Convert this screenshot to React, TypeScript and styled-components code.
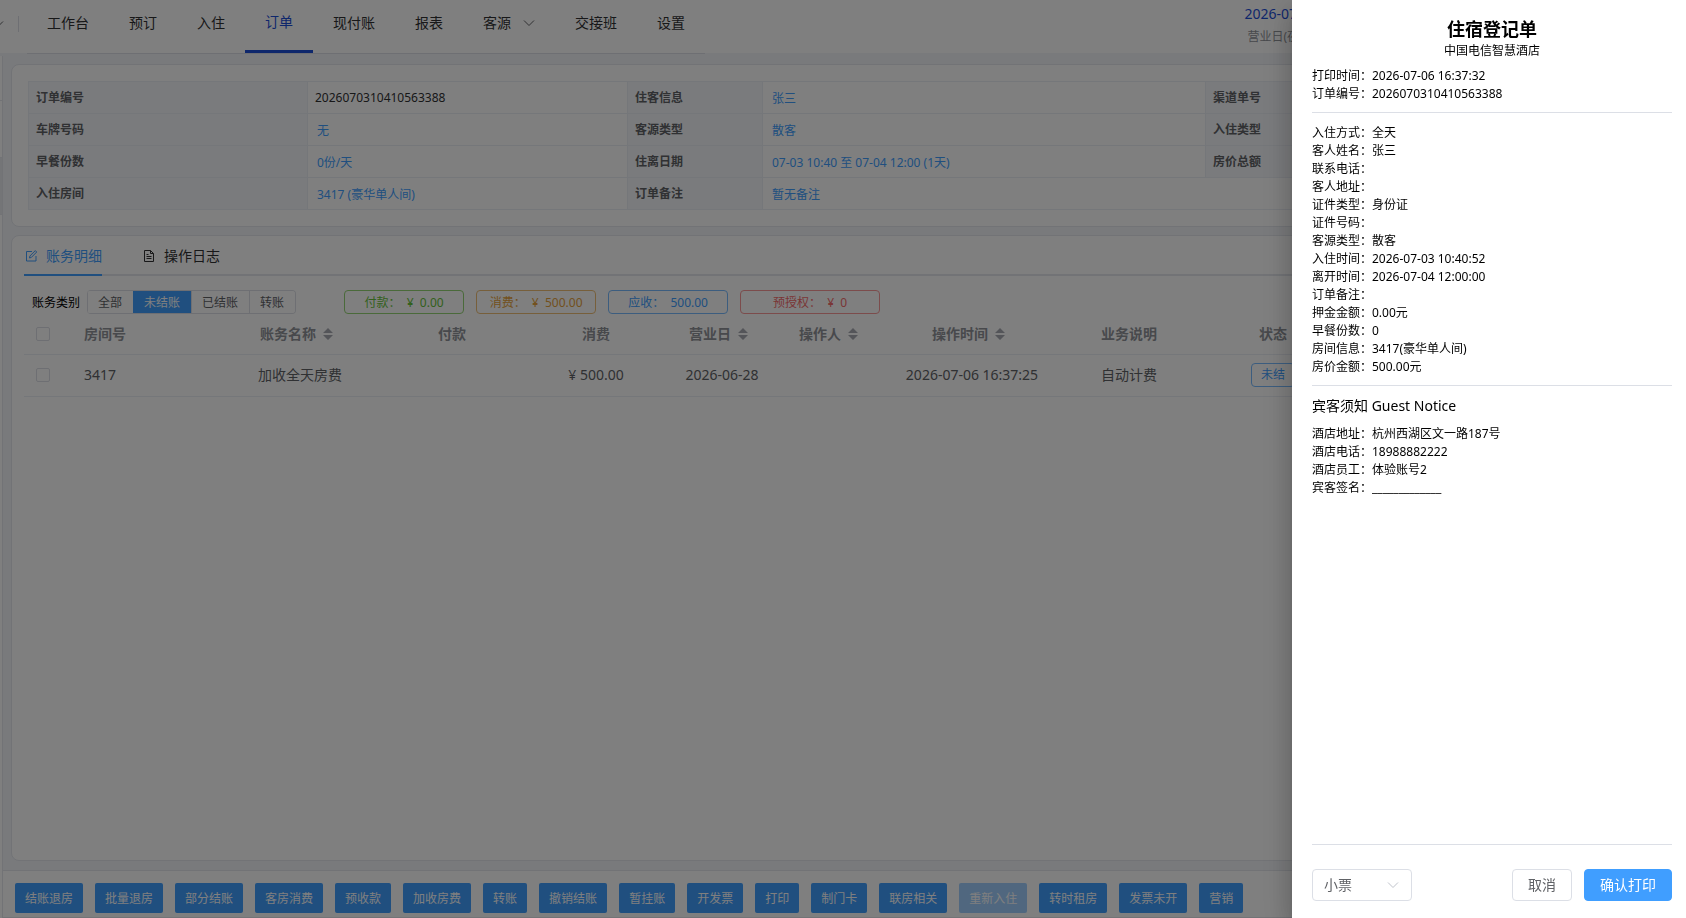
import React from "react";
import styled, { createGlobalStyle, css } from "styled-components";

const GlobalStyle = createGlobalStyle`
  *, *::before, *::after { box-sizing: border-box; }
  html, body, #root { height: 100%; }
  body {
    margin: 0;
    overflow: hidden;
    color: #303133;
    font: 14px/20px "Noto Sans", "Noto Sans CJK SC", sans-serif;
  }
  button, input, select { font: inherit; margin: 0; }
`;

const Page = styled.div`
  display: flex;
  flex-direction: column;
  height: 100vh;
  background: #f3f5f8;
`;

/* ---------- top navigation ---------- */

const Header = styled.header`
  position: relative;
  z-index: 1;
  display: flex;
  align-items: flex-start;
  height: 53px;
  flex: none;
  background: #fff;
`;

const HotelSwitch = styled.div`
  display: flex;
  align-items: center;
  justify-content: space-between;
  width: 27px;
  height: 48px;
  padding-right: 8px;
  overflow: hidden;
`;

const SwitchArrow = styled.svg`
  width: 12px;
  height: 12px;
  margin-left: -8px;
  flex: none;
`;

const Divider = styled.span`
  width: 1px;
  height: 16px;
  background: #dcdfe6;
`;

const Menu = styled.nav`
  display: flex;
  height: 54px;
  border-bottom: 1px solid #dcdfe6;
`;

const MenuItem = styled.a<{ $active?: boolean }>`
  display: flex;
  align-items: center;
  height: 53px;
  padding: 0 20px 7px;
  color: #303133;
  text-decoration: none;
  white-space: nowrap;
  ${(p) =>
    p.$active &&
    css`
      color: #1d4ed8;
      border-bottom: 3px solid #1d4ed8;
    `}
  svg {
    width: 12px;
    height: 12px;
    margin-left: 12px;
  }
`;

const BusinessDay = styled.div`
  width: 80px;
  margin: 4px 365px 0 auto;
  text-align: center;
  white-space: nowrap;
  color: #1d4ed8;
`;

const BusinessNote = styled.div`
  padding-top: 3px;
  font-size: 12px;
  color: #909399;
`;

/* ---------- body ---------- */

const Body = styled.div`
  display: flex;
  flex: 1;
  min-height: 0;
`;

const SideRail = styled.aside`
  display: flex;
  flex-direction: column;
  width: 3px;
  margin-top: 3px;
  border-right: 1px solid #e4e7ed;
  background: #fff;
`;

const RailBlock = styled.div<{ $h: number; $on?: boolean }>`
  height: ${(p) => p.$h}px;
  border-bottom: 1px solid #e4e7ed;
  background: ${(p) => (p.$on ? "#e8eaee" : "#fff")};
`;

const Main = styled.main`
  display: flex;
  flex-direction: column;
  flex: 1;
  min-width: 0;
`;

const Cards = styled.div`
  display: flex;
  flex-direction: column;
  flex: 1;
  gap: 8px;
  min-height: 0;
  padding: 11px 12px 9px 8px;
`;

const Card = styled.section<{ $fill?: boolean }>`
  border: 1px solid #e4e7ed;
  border-radius: 8px;
  background: #fff;
  padding: ${(p) => (p.$fill ? "0 12px" : "16px")};
  flex: ${(p) => (p.$fill ? "1" : "none")};
  min-height: 0;
  overflow: hidden;
`;

const InfoTable = styled.table`
  width: 100%;
  table-layout: fixed;
  border-collapse: collapse;
  font-size: 12px;
  th,
  td {
    height: 32px;
    padding: 0 7px;
    border: 1px solid #ebeef5;
    text-align: left;
    white-space: nowrap;
    line-height: 18px;
  }
  th {
    background: #f5f7fa;
    color: #606266;
    font-weight: 700;
  }
`;

const InfoLink = styled.a`
  display: inline-block;
  padding: 2px 2px 0;
  color: #409eff;
  text-decoration: none;
`;

/* ---------- ledger ---------- */

const Tabs = styled.div`
  display: flex;
  gap: 40px;
  height: 40px;
  border-bottom: 2px solid #e4e7ed;
`;

const Tab = styled.button<{ $active?: boolean }>`
  display: flex;
  align-items: center;
  gap: 8px;
  height: 40px;
  padding: 2px 0 0;
  border: 0;
  border-bottom: 2px solid ${(p) => (p.$active ? "#409eff" : "transparent")};
  background: none;
  color: ${(p) => (p.$active ? "#409eff" : "#303133")};
  svg {
    width: 14px;
    height: 14px;
  }
`;

const FilterBar = styled.div`
  display: flex;
  align-items: center;
  padding-top: 14px;
  font-size: 12px;
`;

const FilterLabel = styled.span`
  margin: 0 7px 0 8px;
  padding-top: 2px;
  color: #000;
`;

const Segments = styled.div`
  display: flex;
  height: 24px;
  border: 1px solid #dcdfe6;
  border-left: 0;
  border-radius: 4px;
  overflow: hidden;
  margin-right: 48px;
`;

const Segment = styled.button<{ $active?: boolean }>`
  padding: 1px 11px 0 10px;
  border: 0;
  border-left: 1px solid ${(p) => (p.$active ? "#409eff" : "#dcdfe6")};
  background: ${(p) => (p.$active ? "#409eff" : "#fff")};
  color: ${(p) => (p.$active ? "#fff" : "#606266")};
  line-height: 22px;
`;

const Chip = styled.span<{ $color: string; $border: string; $wide?: boolean }>`
  width: ${(p) => (p.$wide ? 140 : 120)}px;
  height: 24px;
  padding-top: 1px;
  margin-right: 12px;
  border: 1px solid ${(p) => p.$border};
  border-radius: 4px;
  color: ${(p) => p.$color};
  line-height: 22px;
  text-align: center;
  white-space: pre;
`;

const Ledger = styled.table`
  width: 100%;
  table-layout: fixed;
  border-collapse: collapse;
  th,
  td {
    padding: 0;
    border-bottom: 1px solid #ebeef5;
    text-align: center;
    white-space: nowrap;
  }
  th {
    height: 40px;
    color: #909399;
    font-weight: 700;
  }
  td {
    height: 42px;
    color: #606266;
  }
  th:nth-child(2),
  td:nth-child(2) {
    padding-left: 10px;
    text-align: left;
  }
`;

const HeadCell = styled.span`
  display: inline-flex;
  align-items: center;
  vertical-align: middle;
  svg {
    width: 10px;
    height: 14px;
    margin: 0 7px;
  }
`;

const Tick = styled.input`
  appearance: none;
  display: block;
  width: 14px;
  height: 14px;
  margin: 0 0 0 12px;
  border: 1px solid #dcdfe6;
  border-radius: 2px;
  background: #fff;
`;

const StatusTag = styled.span`
  display: inline-block;
  height: 24px;
  padding: 0 9px;
  border: 1px solid #79bbff;
  border-radius: 4px;
  color: #409eff;
  font-size: 12px;
  line-height: 22px;
  vertical-align: middle;
`;

const ActionBar = styled.footer`
  display: flex;
  gap: 12px;
  height: 48px;
  flex: none;
  padding: 12px;
  border: 1px solid #e4e7ed;
  border-left: 0;
  background: #fff;
`;

const Action = styled.button`
  height: 30px;
  padding: 2px 10px 0;
  border: 0;
  border-radius: 2px;
  background: #409eff;
  color: #fff;
  font-size: 12px;
  white-space: nowrap;
  &:disabled {
    background: #a0cfff;
  }
`;

/* ---------- print drawer ---------- */

const Mask = styled.div`
  position: fixed;
  inset: 0;
  z-index: 10;
  background: rgba(0, 0, 0, 0.5);
`;

const Drawer = styled.aside`
  position: fixed;
  top: 0;
  right: 0;
  bottom: 0;
  z-index: 11;
  display: flex;
  flex-direction: column;
  width: 394px;
  padding: 17px 14px 17px 20px;
  background: #fff;
  color: #000;
  box-shadow: 0 8px 10px -5px rgba(0, 0, 0, 0.2), 0 16px 24px 2px rgba(0, 0, 0, 0.14),
    0 6px 30px 5px rgba(0, 0, 0, 0.12);
`;

const Slip = styled.div`
  flex: 1;
  min-height: 0;
  font-size: 12px;
  line-height: 18px;
`;

const SlipTitle = styled.h1`
  margin: 0;
  font-size: 18px;
  line-height: 24px;
  text-align: center;
`;

const SlipHotel = styled.p`
  margin: 0 0 6px;
  line-height: 20px;
  text-align: center;
`;

const Fields = styled.dl`
  display: grid;
  grid-template-columns: 60px 1fr;
  margin: 0;
  dt,
  dd {
    height: 18px;
    margin: 0;
    white-space: nowrap;
  }
`;

const Rule = styled.hr`
  height: 1px;
  margin: 9px 0 11px;
  border: 0;
  background: #dcdfe6;
`;

const NoticeTitle = styled.h2`
  margin: 0 0 10px;
  font-size: 14px;
  font-weight: 400;
  line-height: 18px;
`;

const DrawerFooter = styled.div`
  display: flex;
  gap: 12px;
  padding-top: 24px;
  border-top: 1px solid #dcdfe6;
`;

const SelectBox = styled.label`
  position: relative;
  margin-right: auto;
  svg {
    position: absolute;
    top: 10px;
    right: 13px;
    width: 12px;
    height: 12px;
    pointer-events: none;
  }
`;

const Select = styled.select`
  appearance: none;
  display: block;
  width: 100px;
  height: 32px;
  padding: 0 11px;
  border: 1px solid #dcdfe6;
  border-radius: 4px;
  background: #fff;
  color: #606266;
`;

const DialogButton = styled.button<{ $primary?: boolean }>`
  height: 32px;
  padding: 0 15px;
  border: 1px solid ${(p) => (p.$primary ? "#409eff" : "#dcdfe6")};
  border-radius: 4px;
  background: ${(p) => (p.$primary ? "#409eff" : "#fff")};
  color: ${(p) => (p.$primary ? "#fff" : "#606266")};
`;

const Chevron = ({ color }: { color: string }) => (
  <svg viewBox="0 0 12 12" fill="none" stroke={color} aria-hidden="true">
    <path d="M1 3.5 6 8.5l5-5" />
  </svg>
);

const SortIcon = () => (
  <svg viewBox="0 0 10 14" fill="#a8abb2" aria-hidden="true">
    <path d="M5 1l5 5H0zM5 13l5-5H0z" />
  </svg>
);

const EditIcon = () => (
  <svg viewBox="0 0 14 14" fill="none" stroke="currentColor" aria-hidden="true">
    <path d="M8 2.5H2.5v9.5h9.5V7" />
    <path d="M5.5 9l.4-2 5.4-5.4 1.4 1.4-5.3 5.4z" />
  </svg>
);

const DocIcon = () => (
  <svg viewBox="0 0 14 14" fill="none" stroke="currentColor" aria-hidden="true">
    <path d="M2.5 1.5h6l3 3v8h-9z" />
    <path d="M8.5 1.5v3h3M4.5 7.5h5M4.5 9.5h5M4.5 5.5h2" />
  </svg>
);

const menu = ["工作台", "预订", "入住", "订单", "现付账", "报表", "客源", "交接班", "设置"];

const actions = [
  "结账退房", "批量退房", "部分结账", "客房消费", "预收款", "加收房费", "转账", "撤销结账", "暂挂账",
  "开发票", "打印", "制门卡", "联房相关", "重新入住", "转时租房", "发票未开", "营销",
];

const columns: [string, number, boolean?][] = [
  ["账务名称", 160, true],
  ["付款", 144],
  ["消费", 144],
  ["营业日", 108, true],
  ["操作人", 112, true],
  ["操作时间", 168, true],
  ["业务说明", 146],
  ["状态", 142],
];

const stay: [string, string][] = [
  ["入住方式", "全天"],
  ["客人姓名", "张三"],
  ["联系电话", ""],
  ["客人地址", ""],
  ["证件类型", "身份证"],
  ["证件号码", ""],
  ["客源类型", "散客"],
  ["入住时间", "2026-07-03 10:40:52"],
  ["离开时间", "2026-07-04 12:00:00"],
  ["订单备注", ""],
  ["押金金额", "0.00元"],
  ["早餐份数", "0"],
  ["房间信息", "3417(豪华单人间)"],
  ["房价金额", "500.00元"],
];

const FieldList = ({ rows }: { rows: [string, string][] }) => (
  <Fields>
    {rows.map(([name, value]) => (
      <React.Fragment key={name}>
        <dt>{name}：</dt>
        <dd>{value}</dd>
      </React.Fragment>
    ))}
  </Fields>
);

const Link = ({ children }: { children: React.ReactNode }) => <InfoLink href="#">{children}</InfoLink>;

export default function App() {
  return (
    <>
      <GlobalStyle />
      <Page>
        <Header>
          <HotelSwitch>
            <SwitchArrow viewBox="0 0 12 12" fill="none" stroke="#606266">
              <path d="M1 3.5 6 8.5l5-5" />
            </SwitchArrow>
            <Divider />
          </HotelSwitch>
          <Menu>
            {menu.map((name) => (
              <MenuItem key={name} href="#" $active={name === "订单"}>
                {name}
                {name === "客源" && <Chevron color="#606266" />}
              </MenuItem>
            ))}
          </Menu>
          <BusinessDay>
            2026-07-06
            <BusinessNote>营业日(夜审)</BusinessNote>
          </BusinessDay>
        </Header>

        <Body>
          <SideRail>
            <RailBlock $h={45} />
            <RailBlock $h={57} />
            <RailBlock $h={57} $on />
          </SideRail>
          <Main>
            <Cards>
              <Card>
                <InfoTable>
                  <colgroup>
                    <col width={279} />
                    <col width={320} />
                    <col width={135} />
                    <col width={443} />
                    <col width={136} />
                    <col />
                  </colgroup>
                  <tbody>
                    <tr>
                      <th>订单编号</th>
                      <td>2026070310410563388</td>
                      <th>住客信息</th>
                      <td><Link>张三</Link></td>
                      <th>渠道单号</th>
                      <td />
                    </tr>
                    <tr>
                      <th>车牌号码</th>
                      <td><Link>无</Link></td>
                      <th>客源类型</th>
                      <td><Link>散客</Link></td>
                      <th>入住类型</th>
                      <td />
                    </tr>
                    <tr>
                      <th>早餐份数</th>
                      <td><Link>0份/天</Link></td>
                      <th>住离日期</th>
                      <td><Link>07-03 10:40 至 07-04 12:00 (1天)</Link></td>
                      <th>房价总额</th>
                      <td />
                    </tr>
                    <tr>
                      <th>入住房间</th>
                      <td><Link>3417 (豪华单人间)</Link></td>
                      <th>订单备注</th>
                      <td colSpan={3}><Link>暂无备注</Link></td>
                    </tr>
                  </tbody>
                </InfoTable>
              </Card>

              <Card $fill>
                <Tabs>
                  <Tab $active><EditIcon />账务明细</Tab>
                  <Tab><DocIcon />操作日志</Tab>
                </Tabs>
                <FilterBar>
                  <FilterLabel>账务类别</FilterLabel>
                  <Segments>
                    {["全部", "未结账", "已结账", "转账"].map((s) => (
                      <Segment key={s} $active={s === "未结账"}>{s}</Segment>
                    ))}
                  </Segments>
                  <Chip $color="#67c23a" $border="#95d475">{"付款：  ¥  0.00"}</Chip>
                  <Chip $color="#e6a23c" $border="#eebe77">{"消费：  ¥  500.00"}</Chip>
                  <Chip $color="#409eff" $border="#79bbff">{"应收：  500.00"}</Chip>
                  <Chip $color="#f56c6c" $border="#f89898" $wide>{"预授权：  ¥  0"}</Chip>
                </FilterBar>
                <Ledger>
                  <colgroup>
                    <col width={50} />
                    <col width={146} />
                    {columns.map(([name, width]) => <col key={name} width={width} />)}
                    <col />
                  </colgroup>
                  <thead>
                    <tr>
                      <th><Tick type="checkbox" aria-label="全选" /></th>
                      <th>房间号</th>
                      {columns.map(([name, , sortable]) => (
                        <th key={name}>
                          <HeadCell>{name}{sortable && <SortIcon />}</HeadCell>
                        </th>
                      ))}
                      <th />
                    </tr>
                  </thead>
                  <tbody>
                    <tr>
                      <td><Tick type="checkbox" aria-label="3417" /></td>
                      <td>3417</td>
                      <td>加收全天房费</td>
                      <td />
                      <td>¥ 500.00</td>
                      <td>2026-06-28</td>
                      <td />
                      <td>2026-07-06 16:37:25</td>
                      <td>自动计费</td>
                      <td><StatusTag>未结</StatusTag></td>
                      <td />
                    </tr>
                  </tbody>
                </Ledger>
              </Card>
            </Cards>

            <ActionBar>
              {actions.map((name) => (
                <Action key={name} disabled={name === "重新入住"}>{name}</Action>
              ))}
            </ActionBar>
          </Main>
        </Body>
      </Page>

      <Mask />
      <Drawer role="dialog" aria-label="住宿登记单">
        <Slip>
          <SlipTitle>住宿登记单</SlipTitle>
          <SlipHotel>中国电信智慧酒店</SlipHotel>
          <FieldList rows={[["打印时间", "2026-07-06 16:37:32"], ["订单编号", "2026070310410563388"]]} />
          <Rule />
          <FieldList rows={stay} />
          <Rule />
          <NoticeTitle>宾客须知 Guest Notice</NoticeTitle>
          <FieldList
            rows={[
              ["酒店地址", "杭州西湖区文一路187号"],
              ["酒店电话", "18988882222"],
              ["酒店员工", "体验账号2"],
              ["宾客签名", "_____________"],
            ]}
          />
        </Slip>
        <DrawerFooter>
          <SelectBox>
            <Select aria-label="打印纸张" defaultValue="小票">
              <option>小票</option>
            </Select>
            <Chevron color="#c0c4cc" />
          </SelectBox>
          <DialogButton>取消</DialogButton>
          <DialogButton $primary>确认打印</DialogButton>
        </DrawerFooter>
      </Drawer>
    </>
  );
}
